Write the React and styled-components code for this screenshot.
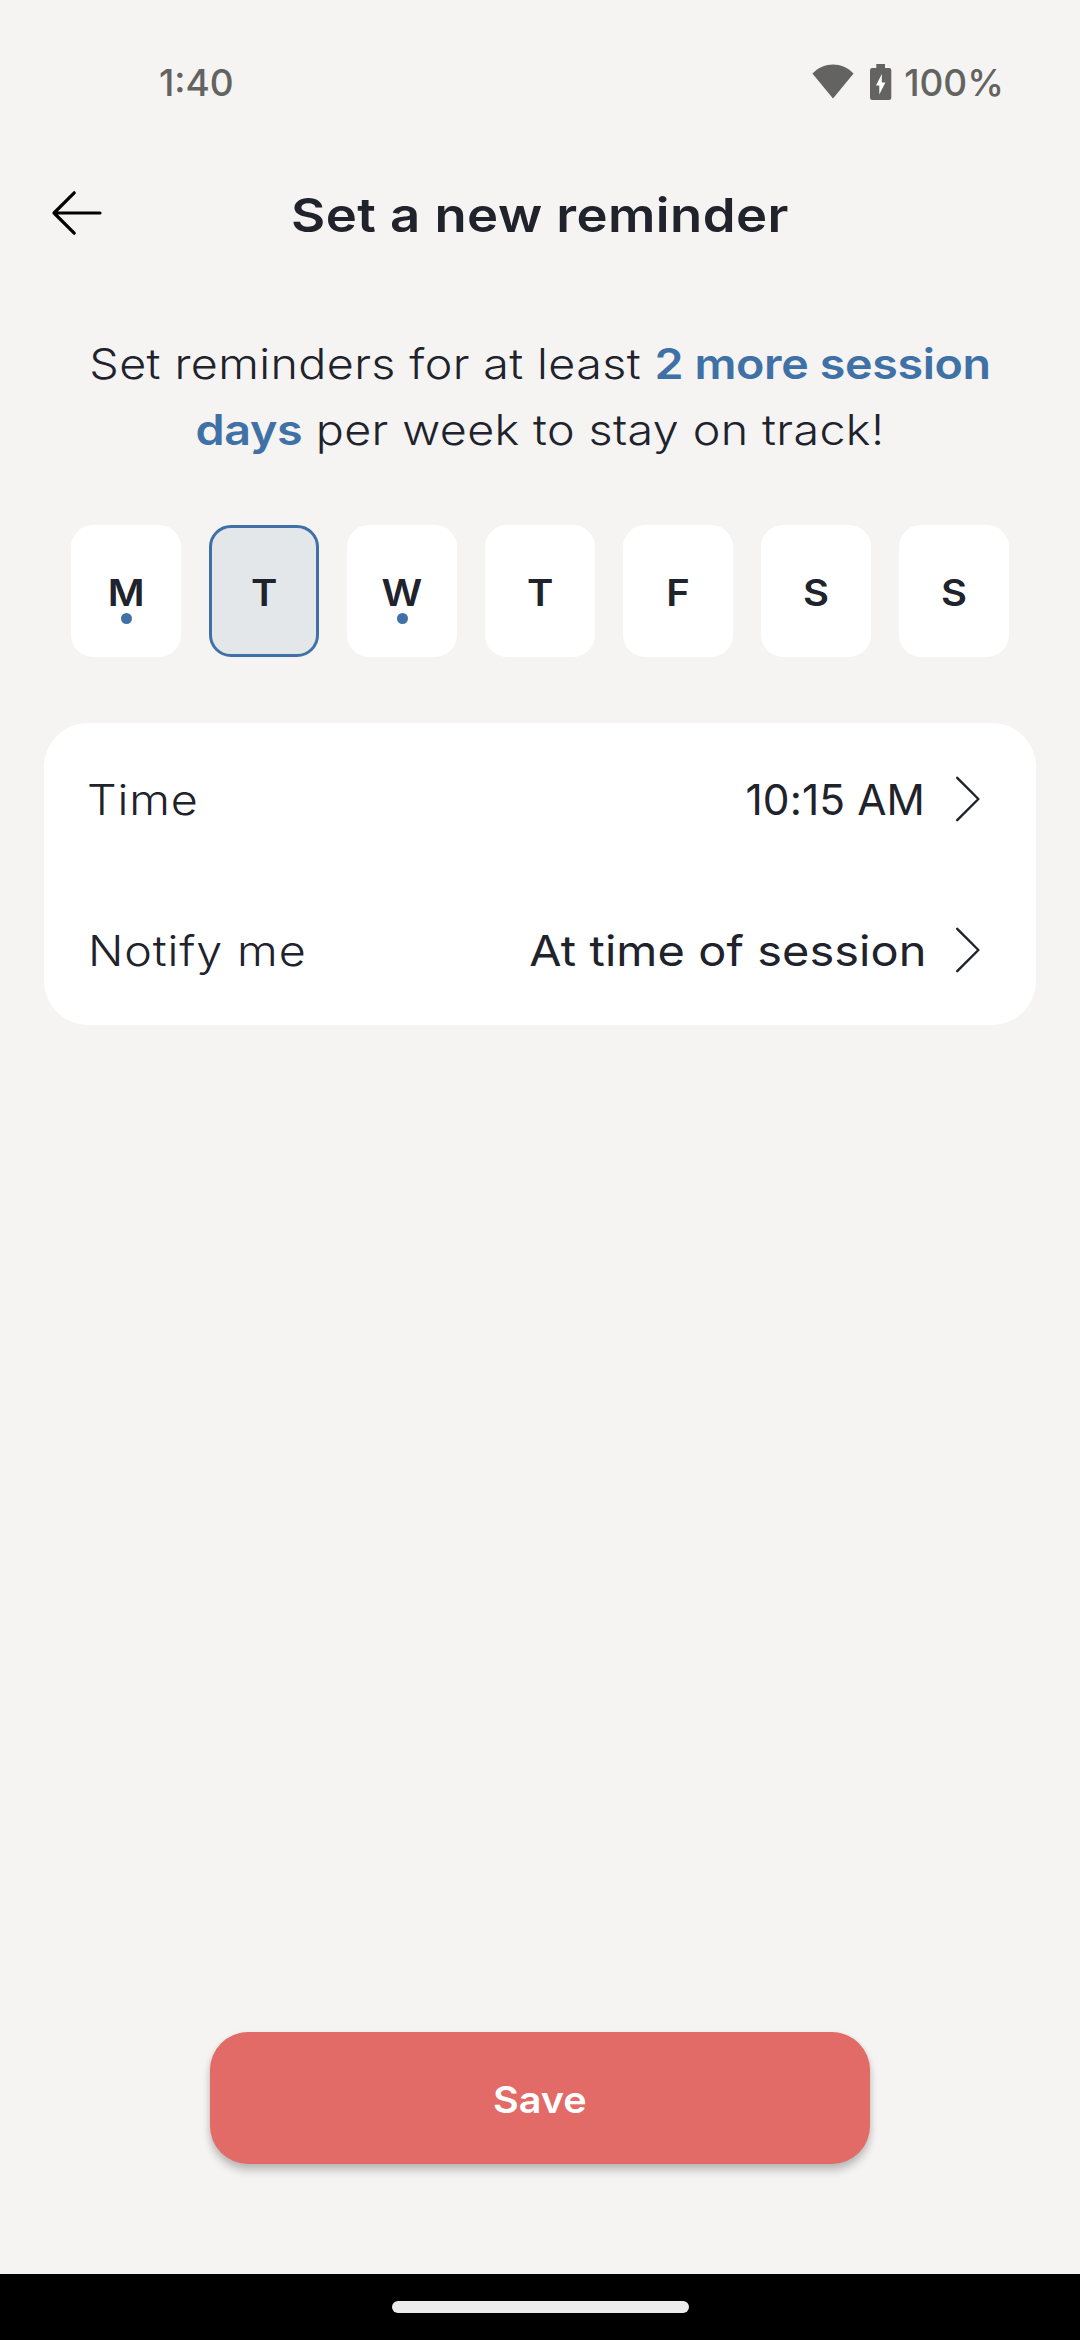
import React, { useState } from "react";
import styled, { createGlobalStyle } from "styled-components";

const ink = "#20222c";
const blue = "#4071a6";
const canvas = "#f5f4f2";
const statusGrey = "#636361";

const GlobalStyle = createGlobalStyle`
  *, *::before, *::after { box-sizing: border-box; }
  body {
    margin: 0;
    background: ${canvas};
    font-family: Inter, Roboto, sans-serif;
    color: ${ink};
  }
  button { font: inherit; color: inherit; border: 0; margin: 0; padding: 0; background: none; }
`;

const Screen = styled.div`
  display: flex;
  flex-direction: column;
  width: 1080px;
  height: 2340px;
  background: ${canvas};
`;

const StatusBar = styled.div`
  display: flex;
  align-items: center;
  justify-content: space-between;
  height: 132px;
  padding: 34px 76px 0 159px;
  color: ${statusGrey};
  font-size: 37px;
  font-weight: 500;
  line-height: 44px;
`;

const StatusIcons = styled.div`
  display: flex;
  align-items: center;
  svg { display: block; margin-top: -2px; }
`;

const BatteryLevel = styled.span`
  margin-left: 12px;
`;

const Header = styled.header`
  display: grid;
  grid-template-columns: 108px 1fr 108px;
  align-items: center;
  height: 165px;
`;

const BackButton = styled.button`
  display: flex;
  padding: 0 0 4px 50px;
`;

const Title = styled.h1`
  margin: 0;
  text-align: center;
  font-size: 47px;
  font-weight: 600;
  letter-spacing: 0.4px;
  line-height: 60px;
  white-space: nowrap;
  transform: scaleX(1.12);
`;

const Message = styled.p`
  margin: 34px 0 0;
  text-align: center;
  font-size: 42.4px;
  font-weight: 300;
  letter-spacing: 0.35px;
  line-height: 66px;
  white-space: nowrap;
  transform: scaleX(1.1);
`;

const Highlight = styled.strong`
  color: ${blue};
  font-weight: 600;
  letter-spacing: -0.35px;
`;

const Days = styled.div`
  display: flex;
  justify-content: center;
  gap: 28px;
  margin-top: 62px;
`;

const Day = styled.button`
  position: relative;
  display: flex;
  align-items: center;
  justify-content: center;
  width: 110px;
  height: 132px;
  padding-top: 3px;
  border: 3px solid ${(p) => (p.$selected ? blue : "#fff")};
  border-radius: 22px;
  background: ${(p) => (p.$selected ? "#e3e7ea" : "#fff")};
  font-size: 37px;
  font-weight: 600;
  line-height: 44px;
`;

const Letter = styled.span`
  transform: scaleX(1.08);
`;

const Dot = styled.span`
  position: absolute;
  left: 50%;
  top: 85px;
  width: 11px;
  height: 11px;
  margin-left: -5px;
  border-radius: 50%;
  background: ${blue};
`;

const Panel = styled.section`
  margin: 66px 44px 0;
  border-radius: 44px;
  background: #fff;
`;

const Setting = styled.button`
  display: flex;
  align-items: center;
  width: 100%;
  height: 151px;
  padding: 2px 55px 0 ${(p) => p.$inset}px;
  font-size: 42.4px;
  line-height: 52px;
  svg { display: block; margin-top: -2px; }
`;

const Label = styled.span`
  font-weight: 300;
  letter-spacing: 0.8px;
  transform: scaleX(1.1);
  transform-origin: left;
`;

const Value = styled.span`
  margin-left: auto;
  margin-right: ${(p) => p.$gap}px;
  font-weight: 400;
  letter-spacing: 0.1px;
  transform: scaleX(${(p) => p.$stretch});
  transform-origin: right;
`;

const SaveButton = styled.button`
  width: 660px;
  height: 132px;
  margin: auto auto 110px;
  padding-top: 3px;
  border-radius: 38px;
  background: #e26a67;
  box-shadow: 0 7px 9px rgba(0, 0, 0, 0.2), 0 2px 6px rgba(0, 0, 0, 0.08);
  color: #fff;
  font-size: 37px;
  font-weight: 600;
`;

const SaveLabel = styled.span`
  display: inline-block;
  transform: scaleX(1.07);
`;

const NavigationBar = styled.div`
  display: flex;
  align-items: center;
  justify-content: center;
  height: 66px;
  background: #000;
`;

const HomeHandle = styled.div`
  width: 297px;
  height: 12px;
  border-radius: 6px;
  background: #ececec;
`;

const WifiIcon = () => (
  <svg width="42" height="36" viewBox="0 0 42 36" fill={statusGrey}>
    <path d="M0.4 9.4 C12 -2.6 30 -2.6 41.6 9.4 L21 34.6 Z" />
  </svg>
);

const BatteryShape = styled.svg`
  margin-left: 16px;
`;

const BatteryIcon = () => (
  <BatteryShape width="22" height="36" viewBox="0 0 22 36" fill={statusGrey}>
    <path d="M6.3 0 H15 V4 H19 Q21.3 4 21.3 6.3 V33.7 Q21.3 36 19 36 H2.3 Q0 36 0 33.7 V6.3 Q0 4 2.3 4 H6.3 Z" />
    <path fill="#fff" d="M11.8 10 V18.5 H15.4 L9.3 30.4 V21.5 H6 Z" />
  </BatteryShape>
);

const ArrowIcon = () => (
  <svg width="54" height="46" viewBox="0 0 54 46" fill="none" stroke="#000" strokeWidth="3.2" strokeLinecap="round" strokeLinejoin="round">
    <path d="M50 23 H4 M24.2 2.8 L4 23 L24.2 43.2" />
  </svg>
);

const ChevronIcon = () => (
  <svg width="26" height="46" viewBox="0 0 26 46" fill="none" stroke={ink} strokeWidth="2.4" strokeLinecap="round" strokeLinejoin="round">
    <path d="M2.2 1.8 L23.4 23 L2.2 44.2" />
  </svg>
);

const week = [
  { id: "mon", letter: "M", scheduled: true },
  { id: "tue", letter: "T" },
  { id: "wed", letter: "W", scheduled: true },
  { id: "thu", letter: "T" },
  { id: "fri", letter: "F" },
  { id: "sat", letter: "S" },
  { id: "sun", letter: "S" },
];

const settings = [
  { label: "Time", value: "10:15 AM", inset: 43, stretch: 1, gap: 30 },
  { label: "Notify me", value: "At time of session", inset: 44, stretch: 1.105, gap: 28 },
];

export default function App() {
  const [selected, setSelected] = useState("tue");
  return (
    <>
      <GlobalStyle />
      <Screen>
        <StatusBar>
          <span>1:40</span>
          <StatusIcons>
            <WifiIcon />
            <BatteryIcon />
            <BatteryLevel>100%</BatteryLevel>
          </StatusIcons>
        </StatusBar>
        <Header>
          <BackButton aria-label="Back">
            <ArrowIcon />
          </BackButton>
          <Title>Set a new reminder</Title>
        </Header>
        <Message>
          Set reminders for at least <Highlight>2 more session</Highlight>
          <br />
          <Highlight>days</Highlight> per week to stay on track!
        </Message>
        <Days>
          {week.map((d) => (
            <Day key={d.id} $selected={d.id === selected} onClick={() => setSelected(d.id)}>
              <Letter>{d.letter}</Letter>
              {d.scheduled && <Dot />}
            </Day>
          ))}
        </Days>
        <Panel>
          {settings.map((s) => (
            <Setting key={s.label} $inset={s.inset}>
              <Label>{s.label}</Label>
              <Value $stretch={s.stretch} $gap={s.gap}>{s.value}</Value>
              <ChevronIcon />
            </Setting>
          ))}
        </Panel>
        <SaveButton>
          <SaveLabel>Save</SaveLabel>
        </SaveButton>
        <NavigationBar>
          <HomeHandle />
        </NavigationBar>
      </Screen>
    </>
  );
}
